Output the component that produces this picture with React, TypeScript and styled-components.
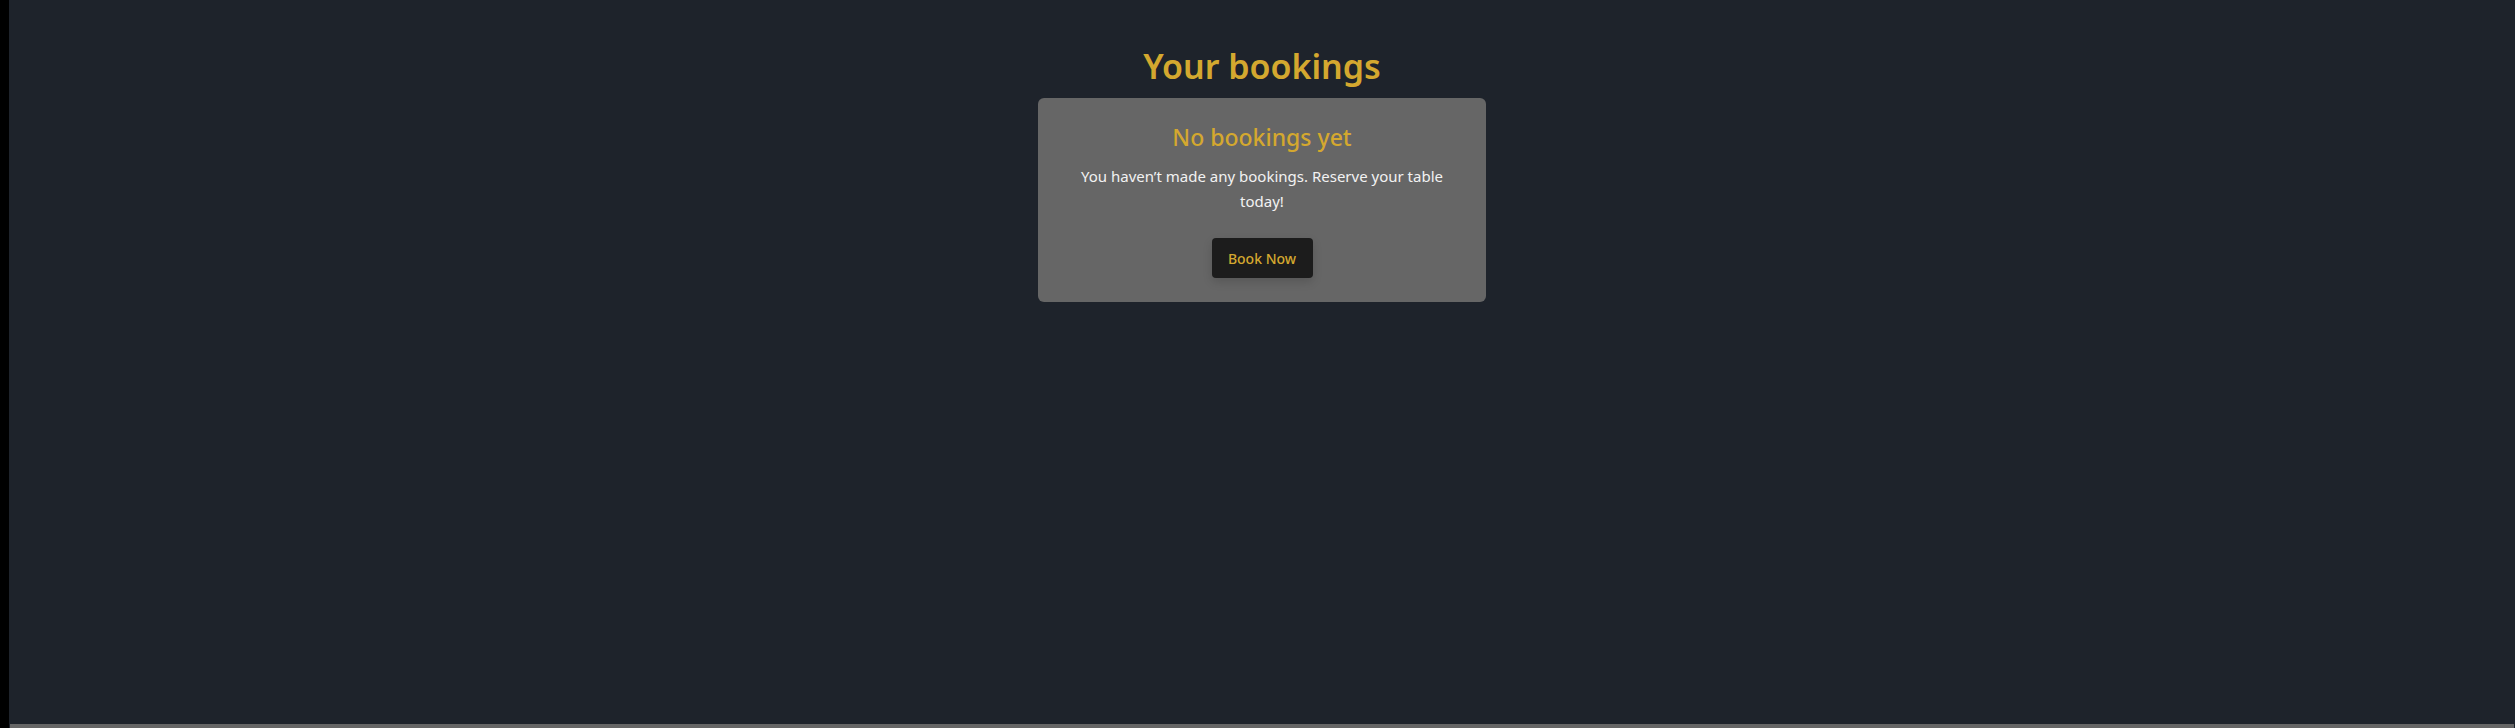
import React from "react";
import styled, { createGlobalStyle } from "styled-components";

const Global = createGlobalStyle`
  html, body { margin: 0; padding: 0; background: #000; }
  body { font-family: "Noto Sans", "Open Sans", sans-serif; }
  * { box-sizing: border-box; }
`;

const Shell = styled.div`
  display: flex;
  width: 2515px;
  height: 728px;
  background: #000;
`;

const Main = styled.div`
  flex: 1;
  margin-left: 9px;
  display: flex;
  flex-direction: column;
  background: #1e232b;
`;

const Content = styled.main`
  flex: 1;
  display: flex;
  flex-direction: column;
  align-items: center;
  padding-top: 42px;
`;

const PageTitle = styled.h1`
  margin: 0 0 8px;
  font-size: 34px;
  line-height: 48px;
  font-weight: 600;
  color: #d4a82f;
`;

const Card = styled.section`
  width: 448px;
  background: #666666;
  border-radius: 6px;
  padding: 24px 32px;
  display: flex;
  flex-direction: column;
  align-items: center;
  text-align: center;
`;

const CardTitle = styled.h2`
  margin: 0 0 12px;
  font-size: 23px;
  line-height: 30px;
  font-weight: 500;
  color: #d4a82f;
`;

const Message = styled.p`
  margin: 0 0 24px;
  font-size: 15px;
  line-height: 25px;
  color: #f2f2f2;
`;

const BookButton = styled.button`
  min-width: 101px;
  height: 40px;
  border: none;
  border-radius: 4px;
  background: #1c1c1c;
  color: #d4a82f;
  font-family: inherit;
  font-size: 14px;
  font-weight: 500;
  box-shadow: 0 4px 10px rgba(0, 0, 0, 0.15);
  cursor: pointer;
`;

const Footer = styled.div`
  height: 4px;
  margin-left: 1px;
  margin-right: 1px;
  background: #666666;
`;

export default function App() {
  return (
    <>
      <Global />
      <Shell>
        <Main>
          <Content>
            <PageTitle>Your bookings</PageTitle>
            <Card>
              <CardTitle>No bookings yet</CardTitle>
              <Message>You haven’t made any bookings. Reserve your table today!</Message>
              <BookButton>Book Now</BookButton>
            </Card>
          </Content>
          <Footer />
        </Main>
      </Shell>
    </>
  );
}
